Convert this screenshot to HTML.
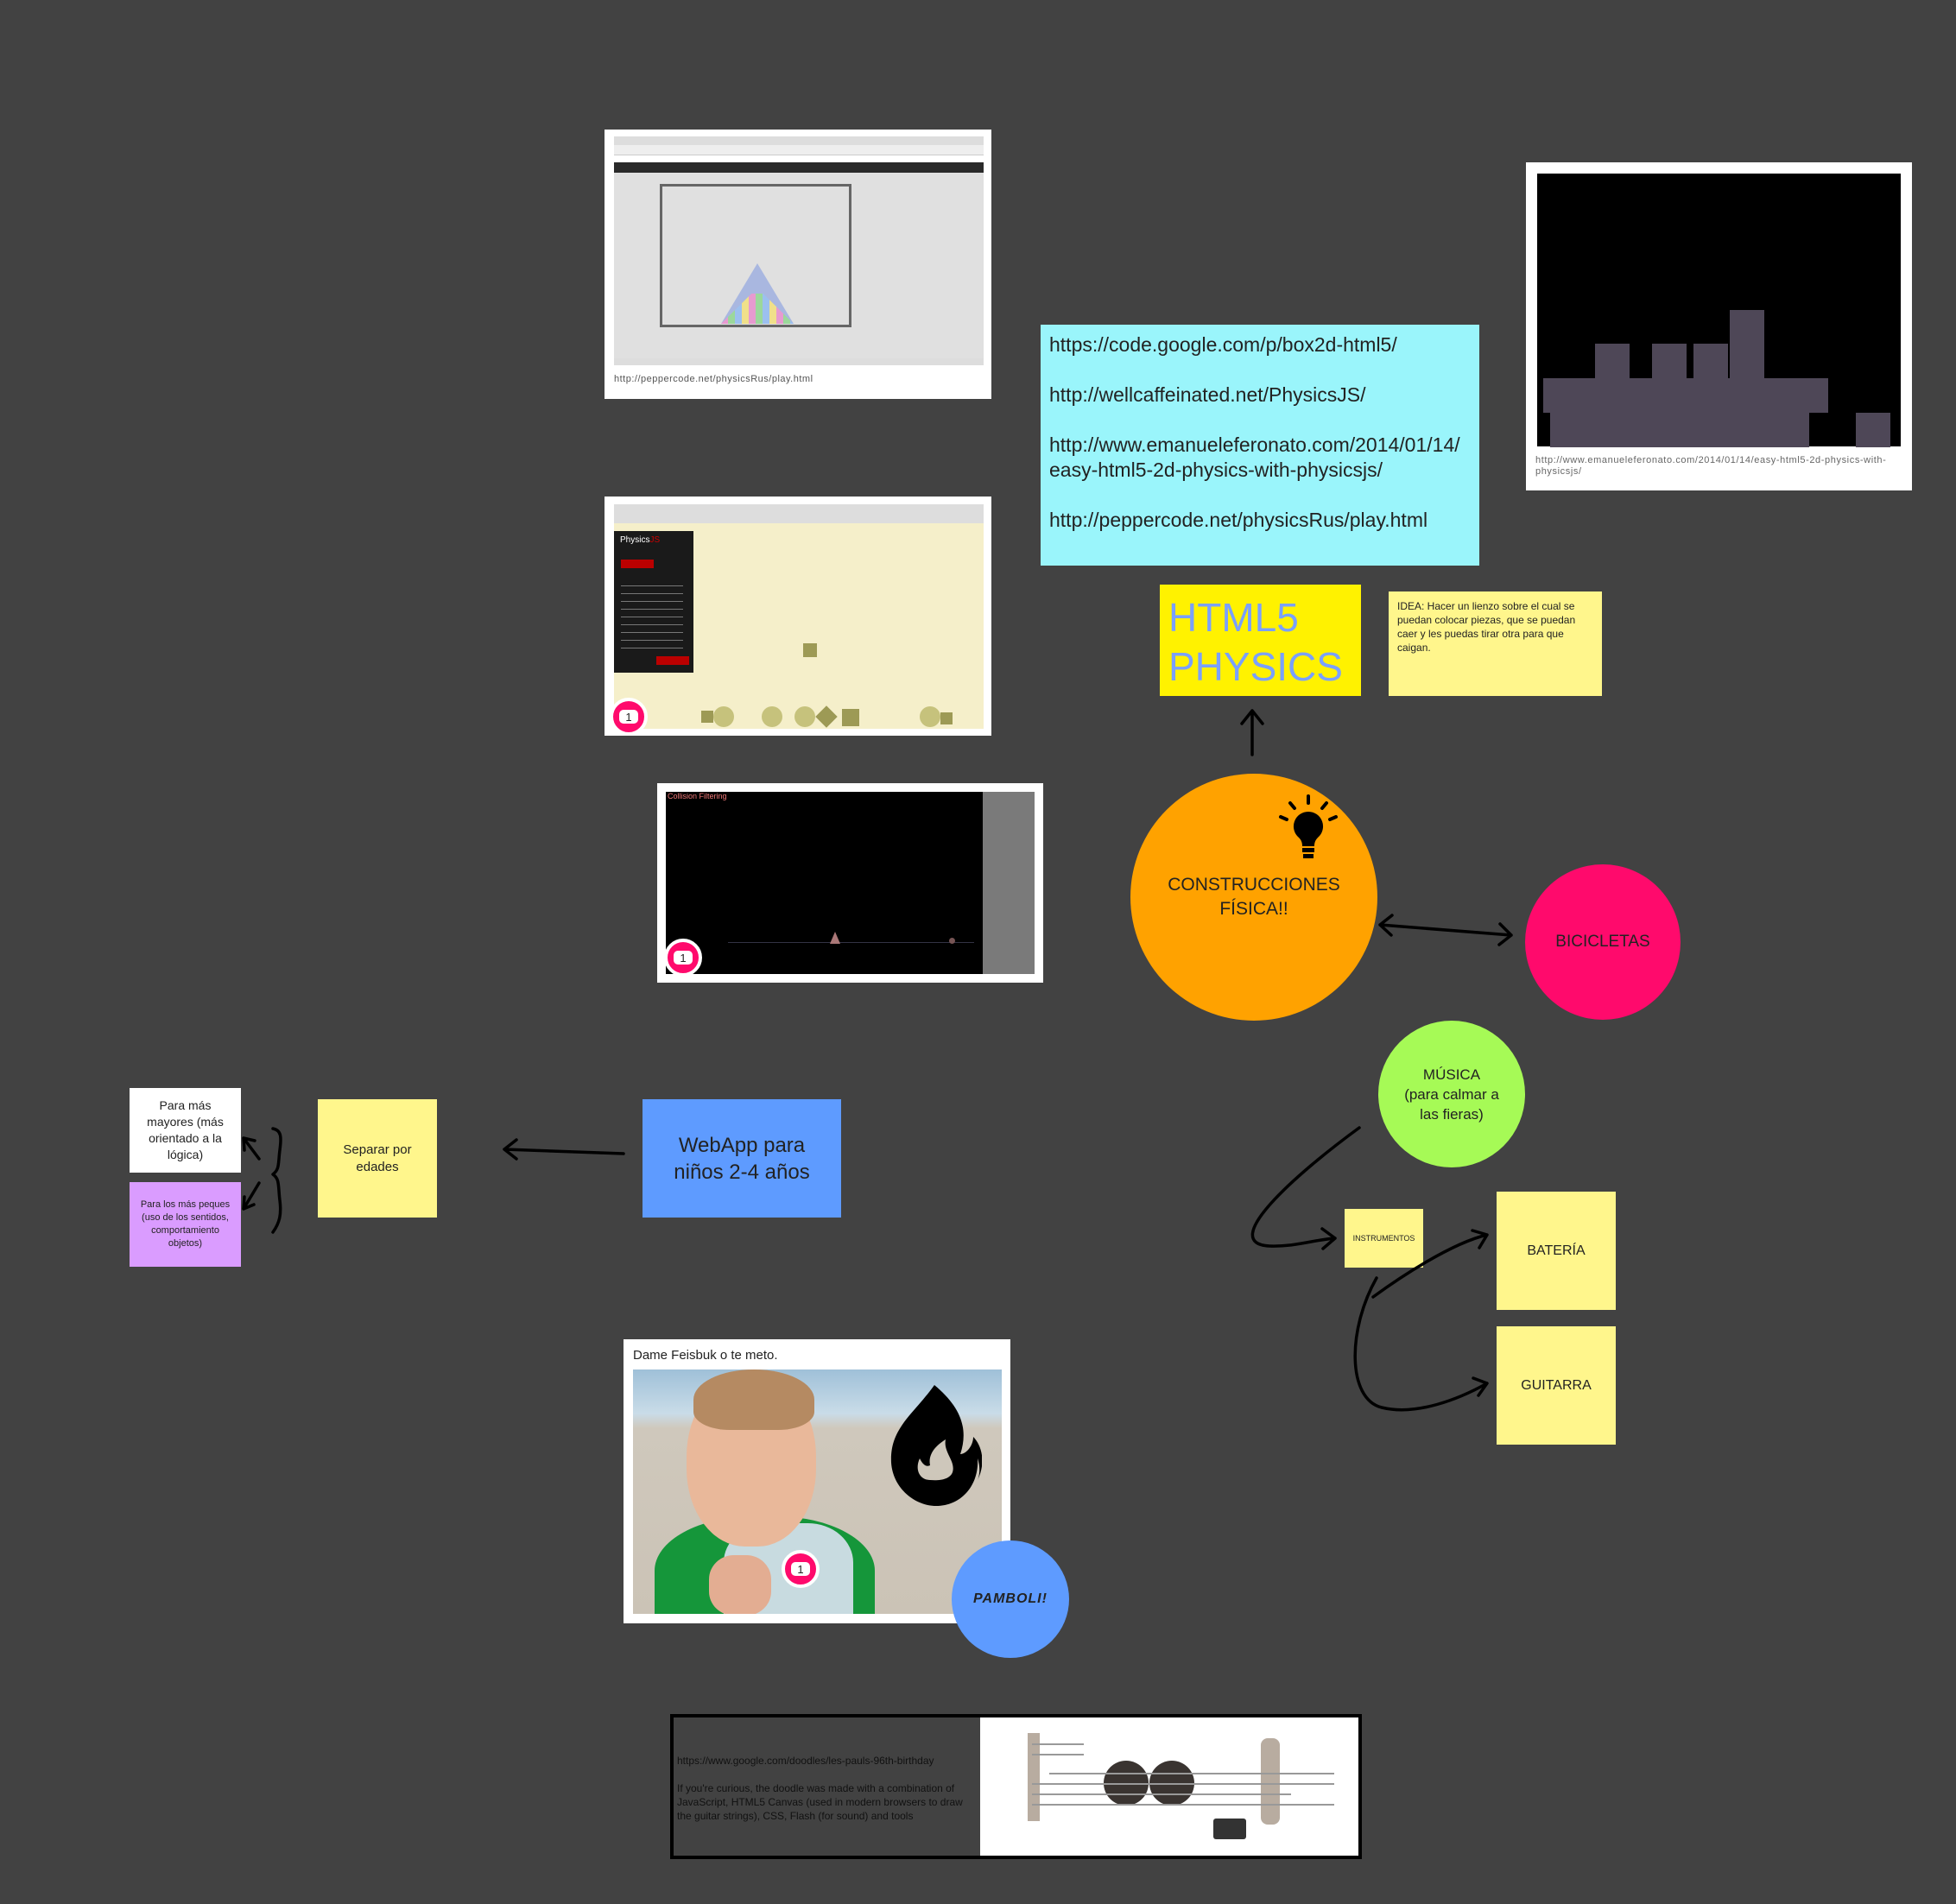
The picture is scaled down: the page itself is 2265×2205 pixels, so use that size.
<!DOCTYPE html>
<html><head><meta charset="utf-8"><style>
*{margin:0;padding:0;box-sizing:border-box}
body{width:2265px;height:2205px;background:#424242;position:relative;overflow:hidden;font-family:"Liberation Sans",sans-serif}
.a{position:absolute}
.note{position:absolute;display:flex;align-items:center;justify-content:center;text-align:center;color:#222}
.circ{position:absolute;border-radius:50%;display:flex;align-items:center;justify-content:center;text-align:center;color:#222}
.badge{position:absolute;width:44px;height:44px;border-radius:50%;background:#ff0a6c;border:4px solid #fff;color:#ff0a6c;font-size:14px;display:flex;align-items:center;justify-content:center}
.badge span{background:#fff;border-radius:5px;width:22px;height:16px;display:flex;align-items:center;justify-content:center;color:#222;font-size:13px}
</style></head><body>

<!-- Screenshot 1 -->
<div class="a" style="left:700px;top:150px;width:448px;height:312px;background:#fff">
  <div class="a" style="left:11px;top:8px;width:428px;height:10px;background:#ddd"></div>
  <div class="a" style="left:11px;top:18px;width:428px;height:12px;background:#eee;border-bottom:1px solid #ccc"></div>
  <div class="a" style="left:11px;top:38px;width:428px;height:12px;background:#2a2a2a"></div>
  <div class="a" style="left:11px;top:50px;width:428px;height:215px;background:#e0e0e0"></div>
  <div class="a" style="left:64px;top:63px;width:222px;height:166px;border:3px solid #666"></div>
  <div class="a" style="left:135px;top:155px;width:0;height:0;border-left:42px solid transparent;border-right:42px solid transparent;border-bottom:70px solid #a9b7e0"></div>
  <div class="a" style="left:135px;top:190px;width:84px;height:35px;background:repeating-linear-gradient(90deg,#e79ad0 0 8px,#9bd89b 8px 16px,#9cc0ef 16px 24px,#f0e08a 24px 32px);clip-path:polygon(42% 0,58% 0,100% 100%,0 100%)"></div>
  <div class="a" style="left:11px;top:265px;width:428px;height:8px;background:#ddd"></div>
  <div class="a" style="left:11px;top:283px;font-size:11px;letter-spacing:0.5px;color:#555">http://peppercode.net/physicsRus/play.html</div>
</div>

<!-- Screenshot 2 -->
<div class="a" style="left:700px;top:575px;width:448px;height:277px;background:#fff">
  <div class="a" style="left:11px;top:9px;width:428px;height:22px;background:#ddd"></div>
  <div class="a" style="left:11px;top:31px;width:428px;height:238px;background:#f5efca"></div>
  <div class="a" style="left:11px;top:40px;width:92px;height:164px;background:#1a1a1a"></div>
  <div class="a" style="left:18px;top:45px;color:#fff;font-size:10px">Physics<span style="color:#c00">JS</span></div>
  <div class="a" style="left:19px;top:73px;width:38px;height:10px;background:#b00"></div>
  <div class="a" style="left:19px;top:98px;width:72px;height:80px;background:repeating-linear-gradient(#1a1a1a 0 5px,#777 5px 6px,#1a1a1a 6px 9px)"></div>
  <div class="a" style="left:60px;top:185px;width:38px;height:10px;background:#b00"></div>
  <div class="a" style="left:230px;top:170px;width:16px;height:16px;background:#9d9a55"></div>
  <div class="a" style="left:112px;top:248px;width:14px;height:14px;background:#9d9a55"></div>
  <div class="a" style="left:126px;top:243px;width:24px;height:24px;border-radius:50%;background:#c6c27c"></div>
  <div class="a" style="left:182px;top:243px;width:24px;height:24px;border-radius:50%;background:#c6c27c"></div>
  <div class="a" style="left:220px;top:243px;width:24px;height:24px;border-radius:50%;background:#c6c27c"></div>
  <div class="a" style="left:248px;top:246px;width:18px;height:18px;background:#9d9a55;transform:rotate(45deg)"></div>
  <div class="a" style="left:275px;top:246px;width:20px;height:20px;background:#9d9a55"></div>
  <div class="a" style="left:365px;top:243px;width:24px;height:24px;border-radius:50%;background:#c6c27c"></div>
  <div class="a" style="left:389px;top:250px;width:14px;height:14px;background:#9d9a55"></div>
  <div class="badge" style="left:6px;top:233px"><span>1</span></div>
</div>

<!-- Screenshot 3 -->
<div class="a" style="left:761px;top:907px;width:447px;height:231px;background:#fff">
  <div class="a" style="left:10px;top:10px;width:367px;height:211px;background:#000"></div>
  <div class="a" style="left:12px;top:10px;color:#e77;font-size:9px">Collision Filtering</div>
  <div class="a" style="left:377px;top:10px;width:60px;height:211px;background:#7a7a7a"></div>
  <div class="a" style="left:82px;top:184px;width:285px;height:1px;background:#334"></div>
  <div class="a" style="left:200px;top:172px;width:0;height:0;border-left:6px solid transparent;border-right:6px solid transparent;border-bottom:14px solid #a77"></div>
  <div class="a" style="left:338px;top:179px;width:7px;height:7px;border-radius:50%;background:#755"></div>
  <div class="badge" style="left:8px;top:180px"><span>1</span></div>
</div>

<!-- Cyan link note -->
<div class="a" style="left:1205px;top:376px;width:508px;height:279px;background:#9af5fb;padding:9px 10px;font-size:23px;line-height:29px;color:#222">
https://code.google.com/p/box2d-html5/<br><br>http://wellcaffeinated.net/PhysicsJS/<br><br>http://www.emanueleferonato.com/2014/01/14/<br>easy-html5-2d-physics-with-physicsjs/<br><br>http://peppercode.net/physicsRus/play.html
</div>

<!-- Black image card -->
<div class="a" style="left:1767px;top:188px;width:447px;height:380px;background:#fff">
  <div class="a" style="left:13px;top:13px;width:421px;height:316px;background:#000"></div>
  <div class="a" style="left:236px;top:171px;width:40px;height:80px;background:#4e4757"></div>
  <div class="a" style="left:80px;top:210px;width:40px;height:40px;background:#4e4757"></div>
  <div class="a" style="left:146px;top:210px;width:40px;height:40px;background:#4e4757"></div>
  <div class="a" style="left:194px;top:210px;width:40px;height:40px;background:#4e4757"></div>
  <div class="a" style="left:20px;top:250px;width:330px;height:40px;background:#4e4757"></div>
  <div class="a" style="left:28px;top:290px;width:300px;height:40px;background:#4e4757"></div>
  <div class="a" style="left:382px;top:290px;width:40px;height:40px;background:#4e4757"></div>
  <div class="a" style="left:11px;top:339px;width:420px;font-size:11px;letter-spacing:0.6px;line-height:13px;color:#666">http://www.emanueleferonato.com/2014/01/14/easy-html5-2d-physics-with-physicsjs/</div>
</div>

<!-- HTML5 PHYSICS -->
<div class="a" style="left:1343px;top:677px;width:233px;height:129px;background:#fff200;padding:10px 10px;color:#7aa0ff;font-size:46px;line-height:57px">HTML5<br>PHYSICS</div>

<!-- IDEA note -->
<div class="a" style="left:1608px;top:685px;width:247px;height:121px;background:#fff68c;padding:9px 10px;font-size:12px;line-height:16px;color:#222">IDEA: Hacer un lienzo sobre el cual se puedan colocar piezas, que se puedan caer y les puedas tirar otra para que caigan.</div>

<!-- Orange circle -->
<div class="circ" style="left:1309px;top:896px;width:286px;height:286px;background:#ffa200;font-size:21px;line-height:28px">CONSTRUCCIONES<br>FÍSICA!!</div>
<svg class="a" style="left:1480px;top:920px" width="70" height="85" viewBox="0 0 70 85">
 <path d="M35 20a17 17 0 0 0-11 30c3 3 4 6 4 10h14c0-4 1-7 4-10a17 17 0 0 0-11-30z" fill="#000"/>
 <rect x="28" y="62" width="14" height="5" fill="#000"/><rect x="29" y="69" width="12" height="5" fill="#000"/>
 <g stroke="#000" stroke-width="4" stroke-linecap="round"><line x1="35" y1="2" x2="35" y2="10"/><line x1="14" y1="10" x2="19" y2="16"/><line x1="56" y1="10" x2="51" y2="16"/><line x1="3" y1="26" x2="10" y2="29"/><line x1="67" y1="26" x2="60" y2="29"/></g>
</svg>

<!-- Pink circle -->
<div class="circ" style="left:1766px;top:1001px;width:180px;height:180px;background:#ff0a6c;font-size:19px">BICICLETAS</div>

<!-- Green circle -->
<div class="circ" style="left:1596px;top:1182px;width:170px;height:170px;background:#a6fa56;font-size:17px;line-height:23px">MÚSICA<br>(para calmar a<br>las fieras)</div>

<!-- WebApp -->
<div class="note" style="left:744px;top:1273px;width:230px;height:137px;background:#5e9bff;font-size:24px;line-height:31px">WebApp para<br>niños 2-4 años</div>

<!-- Separar -->
<div class="note" style="left:368px;top:1273px;width:138px;height:137px;background:#fff68c;font-size:15px;line-height:20px">Separar por<br>edades</div>

<div class="note" style="left:150px;top:1260px;width:129px;height:98px;background:#fff;font-size:14px;line-height:19px">Para más<br>mayores (más<br>orientado a la<br>lógica)</div>
<div class="note" style="left:150px;top:1369px;width:129px;height:98px;background:#da9cff;font-size:11px;line-height:15px">Para los más peques<br>(uso de los sentidos,<br>comportamiento<br>objetos)</div>

<div class="note" style="left:1557px;top:1400px;width:91px;height:68px;background:#fff68c;font-size:9px">INSTRUMENTOS</div>
<div class="note" style="left:1733px;top:1380px;width:138px;height:137px;background:#fff68c;font-size:16px">BATERÍA</div>
<div class="note" style="left:1733px;top:1536px;width:138px;height:137px;background:#fff68c;font-size:16px">GUITARRA</div>

<!-- Baby card -->
<div class="a" style="left:722px;top:1551px;width:448px;height:329px;background:#fff">
  <div class="a" style="left:11px;top:10px;font-size:15px;color:#222">Dame Feisbuk o te meto.</div>
  <div class="a" style="left:11px;top:35px;width:427px;height:283px;background:linear-gradient(180deg,#9fc0d8 0%,#c9dce8 18%,#cfc8bc 24%,#cbc3b6 100%);overflow:hidden">
    <div class="a" style="left:25px;top:170px;width:255px;height:140px;border-radius:45% 45% 0 0;background:#15963a"></div>
    <div class="a" style="left:105px;top:178px;width:150px;height:130px;border-radius:35% 35% 0 0;background:#c8dbe0"></div>
    <div class="a" style="left:62px;top:5px;width:150px;height:200px;border-radius:48% 48% 45% 45%;background:#e9b89a"></div>
    <div class="a" style="left:70px;top:0;width:140px;height:70px;border-radius:50% 50% 30% 30%;background:#b58a62"></div>
    <div class="a" style="left:88px;top:215px;width:72px;height:70px;border-radius:40%;background:#e3ad92"></div>
  </div>
  <svg class="a" style="left:305px;top:53px" width="110" height="145" viewBox="0 0 110 145"><path d="M55 0c-25 35-52 50-50 90 2 30 28 50 52 50 30 0 50-25 48-55 5 15 0 25 0 25 10-20 5-40-5-50 0 10-8 20-15 20 10-30 0-55-30-80zM50 110c-12 0-18-12-12-25 4 8 8 10 12 8-3-15 10-25 18-30-3 15 12 25 8 38-3 8-14 10-26 9z" fill="#000"/></svg>
  <div class="badge" style="left:183px;top:244px"><span>1</span></div>
</div>
<div class="circ" style="left:1102px;top:1784px;width:136px;height:136px;background:#5e9bff;font-size:16px;font-style:italic;font-weight:bold;letter-spacing:1px">PAMBOLI!</div>

<!-- Google doodle -->
<div class="a" style="left:776px;top:1985px;width:801px;height:168px;border:4px solid #000;background:#424242">
  <div class="a" style="left:4px;top:42px;font-size:12px;line-height:16px;color:#111;width:340px">https://www.google.com/doodles/les-pauls-96th-birthday<br><br>If you're curious, the doodle was made with a combination of JavaScript, HTML5 Canvas (used in modern browsers to draw the guitar strings), CSS, Flash (for sound) and tools</div>
  <div class="a" style="left:355px;top:0;width:438px;height:160px;background:#fff">
    <div class="a" style="left:55px;top:18px;width:14px;height:102px;background:#b8aca0"></div>
    <div class="a" style="left:325px;top:24px;width:22px;height:100px;background:#b8aca0;border-radius:8px"></div>
    <div class="a" style="left:143px;top:50px;width:52px;height:52px;border-radius:50%;background:#3a3431"></div>
    <div class="a" style="left:196px;top:50px;width:52px;height:52px;border-radius:50%;background:#3a3431"></div>
    <div class="a" style="left:60px;top:30px;width:60px;height:2px;background:#999"></div>
    <div class="a" style="left:60px;top:42px;width:60px;height:2px;background:#999"></div>
    <div class="a" style="left:80px;top:64px;width:330px;height:2px;background:#999"></div>
    <div class="a" style="left:60px;top:76px;width:350px;height:2px;background:#999"></div>
    <div class="a" style="left:60px;top:88px;width:300px;height:2px;background:#999"></div>
    <div class="a" style="left:60px;top:100px;width:350px;height:2px;background:#999"></div>
    <div class="a" style="left:270px;top:117px;width:38px;height:24px;background:#333;border-radius:3px"></div>
  </div>
</div>

<!-- arrows -->
<svg class="a" style="left:0;top:0" width="2265" height="2205" fill="none" stroke="#000" stroke-width="3.5" stroke-linecap="round" stroke-linejoin="round">
 <path d="M1450 874V823M1438 838L1450 823L1462 838"/>
 <path d="M1598 1071L1750 1083M1612 1060L1598 1071L1611 1083M1737 1070L1750 1083L1736 1094"/>
 <path d="M722 1336L584 1331M598 1320L584 1331L598 1342"/>
 <path d="M316 1307c10 2 10 10 8 25-2 15 0 22-8 28 8 5 6 14 8 30 2 16 0 26-8 37"/>
 <path d="M300 1342L282 1318M282 1318L283 1332M282 1318L295 1321"/>
 <path d="M300 1370L282 1400M282 1400L283 1386M282 1400L294 1395"/>
 <path d="M1574 1306C1500 1360 1410 1440 1470 1443C1500 1444 1520 1436 1546 1434M1531 1423L1546 1434L1532 1446"/>
 <path d="M1590 1502C1620 1480 1680 1440 1722 1430M1705 1425L1722 1430L1713 1445"/>
 <path d="M1594 1480C1560 1540 1560 1620 1600 1630C1640 1640 1690 1620 1722 1602M1706 1596L1722 1602L1712 1616"/>
</svg>
</body></html>
